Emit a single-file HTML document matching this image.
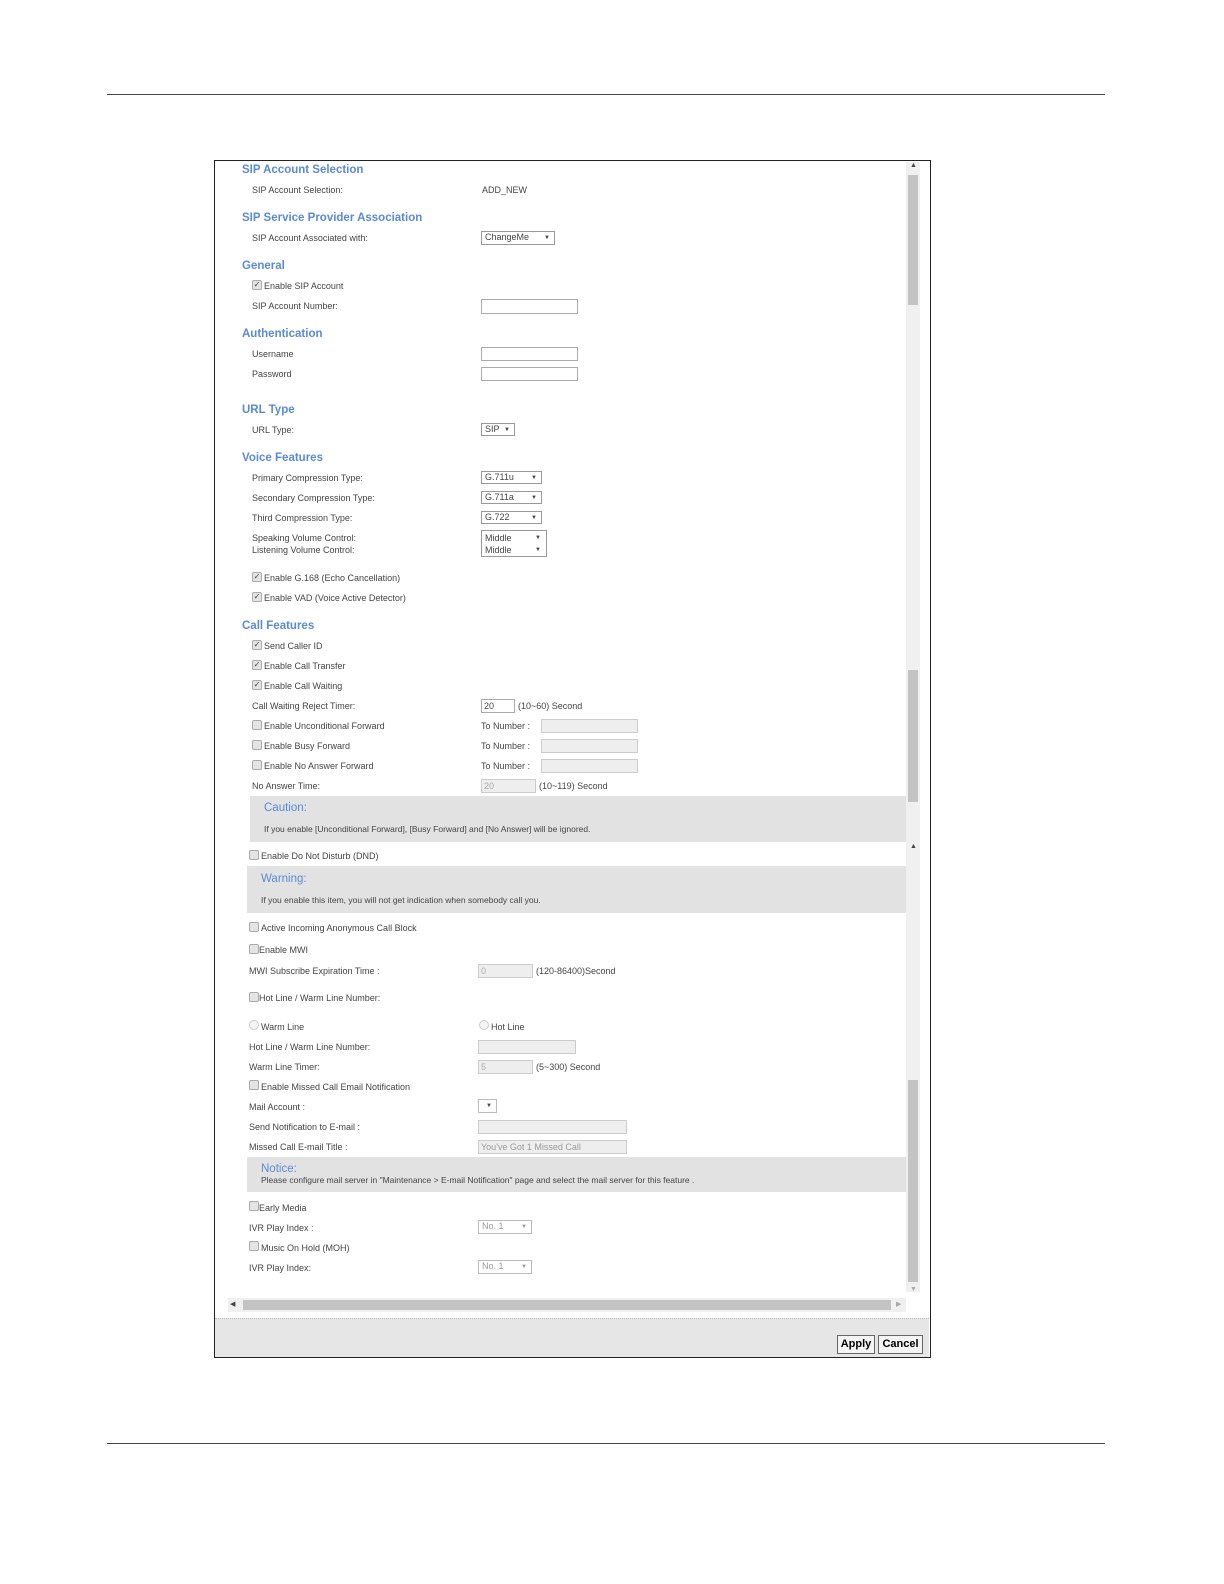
<!DOCTYPE html>
<html><head><meta charset="utf-8"><style>
html,body{margin:0;background:#fff;font-family:"Liberation Sans",sans-serif;overflow:hidden;width:1224px;height:1584px}
.p{position:relative;width:1224px;height:1584px;overflow:hidden}
.a{position:absolute;font-size:9px;color:#444;white-space:nowrap;line-height:12px}
.h{position:absolute;font-size:11.5px;font-weight:bold;color:#5a8ad6;white-space:nowrap;line-height:14px}
.b{position:absolute;border:1px solid #aaa;background:#fff;box-sizing:border-box}
.g{background:#eee;border-color:#ccc}
.sel{position:absolute;border:1px solid #999;background:#fff;box-sizing:border-box;font-size:9px;color:#444;line-height:11px;padding-left:3px}
.sel:after{content:"▼";position:absolute;right:4px;top:1px;font-size:6px}
.cb{position:absolute;width:8px;height:8px;border:1px solid #aaa;background:#e4e4e4;border-radius:2px;font-size:8px;line-height:8px;text-align:center;color:#444}
.box{position:absolute;background:#e2e2e2}
</style></head><body><div class="p">
<div style="position:absolute;left:107px;top:94px;width:998px;height:1px;background:#444"></div>
<div style="position:absolute;left:107px;top:1443px;width:998px;height:1px;background:#444"></div>
<div style="position:absolute;left:214px;top:160px;width:715px;height:1196px;border:1px solid #222"></div>
<div style="position:absolute;left:906px;top:162px;width:14px;height:1130px;background:#f0f0f0"></div>
<div style="position:absolute;left:908px;top:175px;width:10px;height:130px;background:#c3c3c3"></div>
<div style="position:absolute;left:908px;top:670px;width:10px;height:132px;background:#c3c3c3"></div>
<div style="position:absolute;left:908px;top:1080px;width:10px;height:202px;background:#c3c3c3"></div>
<div class="a" style="left:910px;top:160px;font-size:7px">▲</div>
<div class="a" style="left:910px;top:841px;font-size:7px">▲</div>
<div class="a" style="left:910px;top:1284px;font-size:7px;color:#aaa">▼</div>
<div style="position:absolute;left:228px;top:1298px;width:678px;height:14px;background:#f0f0f0"></div>
<div style="position:absolute;left:243px;top:1300px;width:648px;height:10px;background:#c3c3c3"></div>
<div class="a" style="left:230px;top:1299px;font-size:7px">◀</div>
<div class="a" style="left:896px;top:1299px;font-size:7px;color:#aaa">▶</div>
<div style="position:absolute;left:215px;top:1318px;width:714px;height:38px;background:#e6e6e6;border-top:1px dotted #bbb"></div>
<div style="position:absolute;left:837px;top:1335px;width:38px;height:19px;border:1px solid #666;background:#f4f4f4;font-size:11px;font-weight:bold;text-align:center;line-height:17px;box-sizing:border-box">Apply</div>
<div style="position:absolute;left:878px;top:1335px;width:45px;height:19px;border:1px solid #666;background:#f4f4f4;font-size:11px;font-weight:bold;text-align:center;line-height:17px;box-sizing:border-box">Cancel</div>

<div class="h" style="left:242px;top:163px">SIP Account Selection</div>
<div class="a" style="left:252px;top:184px">SIP Account Selection:</div>
<div class="a" style="left:482px;top:184px">ADD_NEW</div>
<div class="h" style="left:242px;top:211px">SIP Service Provider Association</div>
<div class="a" style="left:252px;top:232px">SIP Account Associated with:</div>
<div class="sel" style="left:481px;top:231px;width:74px;height:14px">ChangeMe</div>
<div class="h" style="left:242px;top:259px">General</div>
<div class="cb" style="left:252px;top:280px">✓</div><div class="a" style="left:264px;top:280px">Enable SIP Account</div>
<div class="a" style="left:252px;top:300px">SIP Account Number:</div>
<div class="b" style="left:481px;top:299px;width:97px;height:15px"></div>
<div class="h" style="left:242px;top:327px">Authentication</div>
<div class="a" style="left:252px;top:348px">Username</div>
<div class="b" style="left:481px;top:347px;width:97px;height:14px"></div>
<div class="a" style="left:252px;top:368px">Password</div>
<div class="b" style="left:481px;top:367px;width:97px;height:14px"></div>
<div class="h" style="left:242px;top:403px">URL Type</div>
<div class="a" style="left:252px;top:424px">URL Type:</div>
<div class="sel" style="left:481px;top:423px;width:34px;height:13px">SIP</div>
<div class="h" style="left:242px;top:451px">Voice Features</div>
<div class="a" style="left:252px;top:472px">Primary Compression Type:</div>
<div class="sel" style="left:481px;top:471px;width:61px;height:13px">G.711u</div>
<div class="a" style="left:252px;top:492px">Secondary Compression Type:</div>
<div class="sel" style="left:481px;top:491px;width:61px;height:13px">G.711a</div>
<div class="a" style="left:252px;top:512px">Third Compression Type:</div>
<div class="sel" style="left:481px;top:511px;width:61px;height:13px">G.722</div>
<div class="a" style="left:252px;top:532px">Speaking Volume Control:<br>Listening Volume Control:</div>
<div style="position:absolute;left:481px;top:530px;width:66px;height:27px;border:1px solid #999;box-sizing:border-box"></div>
<div class="a" style="left:485px;top:532px">Middle<br>Middle</div>
<div class="a" style="left:535px;top:532px;font-size:6px">▼<br>▼</div>
<div class="cb" style="left:252px;top:572px">✓</div><div class="a" style="left:264px;top:572px">Enable G.168 (Echo Cancellation)</div>
<div class="cb" style="left:252px;top:592px">✓</div><div class="a" style="left:264px;top:592px">Enable VAD (Voice Active Detector)</div>
<div class="h" style="left:242px;top:619px">Call Features</div>
<div class="cb" style="left:252px;top:640px">✓</div><div class="a" style="left:264px;top:640px">Send Caller ID</div>
<div class="cb" style="left:252px;top:660px">✓</div><div class="a" style="left:264px;top:660px">Enable Call Transfer</div>
<div class="cb" style="left:252px;top:680px">✓</div><div class="a" style="left:264px;top:680px">Enable Call Waiting</div>
<div class="a" style="left:252px;top:700px">Call Waiting Reject Timer:</div>
<div class="b" style="left:481px;top:699px;width:34px;height:14px"></div><div class="a" style="left:484px;top:700px">20</div>
<div class="a" style="left:518px;top:700px">(10~60) Second</div>
<div class="cb" style="left:252px;top:720px"></div><div class="a" style="left:264px;top:720px">Enable Unconditional Forward</div>
<div class="a" style="left:481px;top:720px">To Number :</div><div class="b g" style="left:541px;top:719px;width:97px;height:14px"></div>
<div class="cb" style="left:252px;top:740px"></div><div class="a" style="left:264px;top:740px">Enable Busy Forward</div>
<div class="a" style="left:481px;top:740px">To Number :</div><div class="b g" style="left:541px;top:739px;width:97px;height:14px"></div>
<div class="cb" style="left:252px;top:760px"></div><div class="a" style="left:264px;top:760px">Enable No Answer Forward</div>
<div class="a" style="left:481px;top:760px">To Number :</div><div class="b g" style="left:541px;top:759px;width:97px;height:14px"></div>
<div class="a" style="left:252px;top:780px">No Answer Time:</div>
<div class="b g" style="left:481px;top:779px;width:55px;height:14px"></div><div class="a" style="left:484px;top:780px;color:#aaa">20</div>
<div class="a" style="left:539px;top:780px">(10~119) Second</div>
<div class="box" style="left:250px;top:796px;width:656px;height:46px"></div>
<div class="h" style="left:264px;top:801px;font-weight:normal">Caution:</div>
<div class="a" style="left:264px;top:823px;font-size:8.5px">If you enable [Unconditional Forward], [Busy Forward] and [No Answer] will be ignored.</div>
<div class="cb" style="left:249px;top:850px"></div><div class="a" style="left:261px;top:850px">Enable Do Not Disturb (DND)</div>
<div class="box" style="left:247px;top:866px;width:659px;height:47px"></div>
<div class="h" style="left:261px;top:872px;font-weight:normal">Warning:</div>
<div class="a" style="left:261px;top:894px;font-size:8.5px">If you enable this item, you will not get indication when somebody call you.</div>
<div class="cb" style="left:249px;top:922px"></div><div class="a" style="left:261px;top:922px">Active Incoming Anonymous Call Block</div>
<div class="cb" style="left:249px;top:944px"></div><div class="a" style="left:259px;top:944px">Enable MWI</div>
<div class="a" style="left:249px;top:965px">MWI Subscribe Expiration Time :</div>
<div class="b g" style="left:478px;top:964px;width:55px;height:14px"></div><div class="a" style="left:481px;top:965px;color:#aaa">0</div>
<div class="a" style="left:536px;top:965px">(120-86400)Second</div>
<div class="cb" style="left:249px;top:992px"></div><div class="a" style="left:259px;top:992px">Hot Line / Warm Line Number:</div>
<div class="cb" style="left:249px;top:1020px;border-radius:50%;border-color:#ccc;background:#f4f4f4"></div><div class="a" style="left:261px;top:1021px">Warm Line</div>
<div class="cb" style="left:479px;top:1020px;border-radius:50%;border-color:#ccc;background:#f4f4f4"></div><div class="a" style="left:491px;top:1021px">Hot Line</div>
<div class="a" style="left:249px;top:1041px">Hot Line / Warm Line Number:</div>
<div class="b g" style="left:478px;top:1040px;width:98px;height:14px"></div>
<div class="a" style="left:249px;top:1061px">Warm Line Timer:</div>
<div class="b g" style="left:478px;top:1060px;width:55px;height:14px"></div><div class="a" style="left:481px;top:1061px;color:#aaa">5</div>
<div class="a" style="left:536px;top:1061px">(5~300) Second</div>
<div class="cb" style="left:249px;top:1080px"></div><div class="a" style="left:261px;top:1081px">Enable Missed Call Email Notification</div>
<div class="a" style="left:249px;top:1101px">Mail Account :</div>
<div class="sel" style="left:478px;top:1099px;width:19px;height:14px;border-color:#bbb"></div>
<div class="a" style="left:249px;top:1121px">Send Notification to E-mail :</div>
<div class="b g" style="left:478px;top:1120px;width:149px;height:14px"></div>
<div class="a" style="left:249px;top:1141px">Missed Call E-mail Title :</div>
<div class="b g" style="left:478px;top:1140px;width:149px;height:14px"></div><div class="a" style="left:481px;top:1141px;color:#999">You've Got 1 Missed Call</div>
<div class="box" style="left:247px;top:1157px;width:659px;height:35px"></div>
<div class="h" style="left:261px;top:1162px;font-weight:normal">Notice:</div>
<div class="a" style="left:261px;top:1174px;font-size:8.5px">Please configure mail server in "Maintenance &gt; E-mail Notification" page and select the mail server for this feature .</div>
<div class="cb" style="left:249px;top:1201px"></div><div class="a" style="left:259px;top:1202px">Early Media</div>
<div class="a" style="left:249px;top:1222px">IVR Play Index :</div>
<div class="sel" style="left:478px;top:1220px;width:54px;height:14px;border-color:#bbb;color:#999">No. 1</div>
<div class="cb" style="left:249px;top:1241px"></div><div class="a" style="left:261px;top:1242px">Music On Hold (MOH)</div>
<div class="a" style="left:249px;top:1262px">IVR Play Index:</div>
<div class="sel" style="left:478px;top:1260px;width:54px;height:14px;border-color:#bbb;color:#999">No. 1</div>
</div></body></html>
